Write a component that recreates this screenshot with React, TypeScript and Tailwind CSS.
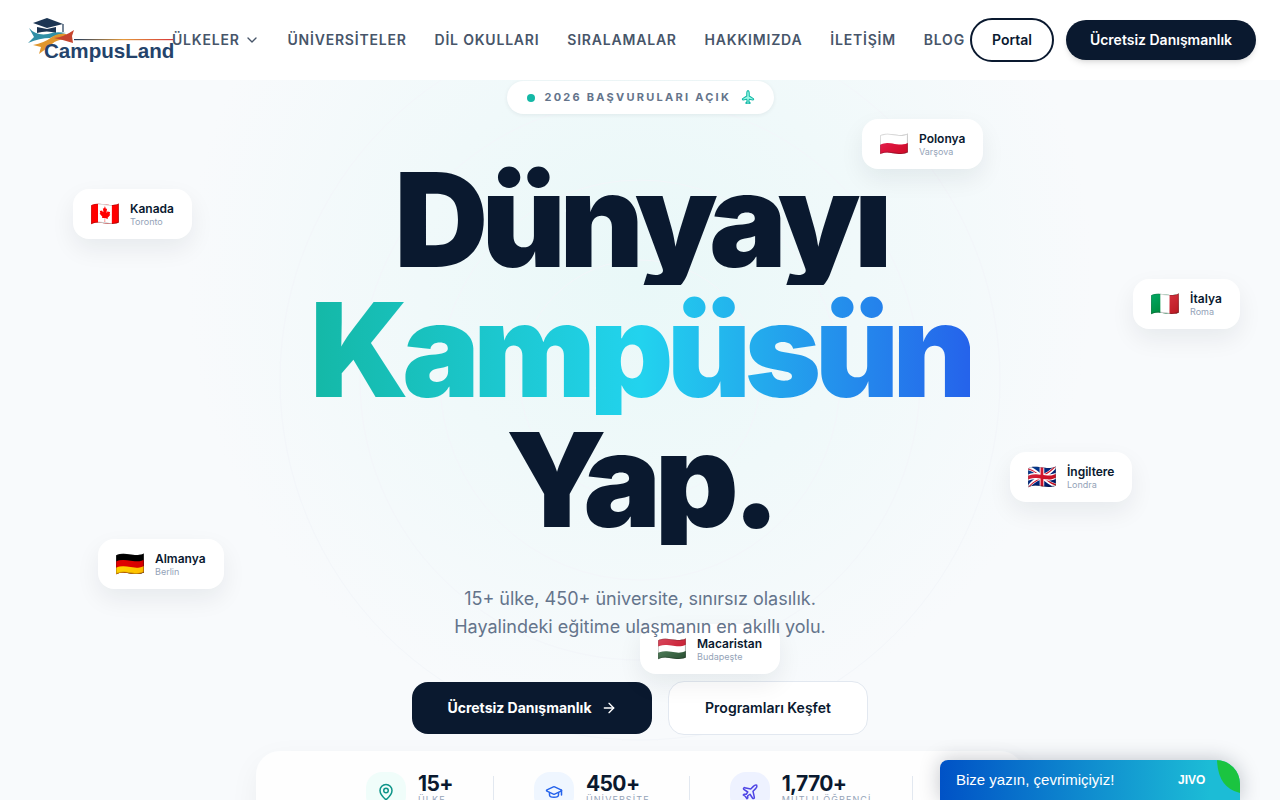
import React from "react";
import { ChevronDown, ArrowRight, MapPin, GraduationCap, Plane } from "lucide-react";

const NAV = ["ÜNİVERSİTELER", "DİL OKULLARI", "SIRALAMALAR", "HAKKIMIZDA", "İLETİŞİM", "BLOG"];

function Logo() {
  return (
    <div className="relative w-[148px] h-[48px] shrink-0 ml-[26px]">
      <svg className="absolute left-0 top-0" width="148" height="48" viewBox="0 0 148 48">
        <defs>
          <linearGradient id="ln" x1="0" x2="1" y1="0" y2="0">
            <stop offset="0" stopColor="#1e3a5f" />
            <stop offset="0.5" stopColor="#e39a3b" />
            <stop offset="1" stopColor="#d8383a" />
          </linearGradient>
        </defs>
        <path d="M7 7 L21 2 L37 8 L21 12 Z" fill="#1c3553" />
        <path d="M11 11 L21 13 L30 11 L30 17 Q21 14 11 17 Z" fill="#1c3553" />
        <path d="M37 8 V16" stroke="#1c3553" strokeWidth="1.2" />
        <path d="M3 12 Q10 20 22 18 Q30 15 40 17 Q30 19 24 22 Q14 22 2 27 L8 21 Z" fill="#2f8fa6" />
        <path d="M7 29 Q18 27 26 21 Q32 17 40 18 L44 24 Q32 22 26 28 Q20 33 13 38 L15 31 Z" fill="#e0962e" />
        <path d="M28 22 Q38 21 48 14 L46 20 L47 27 Q38 24 28 22 Z" fill="#c6452f" />
        <rect x="48" y="23" width="99" height="1.2" fill="url(#ln)" />
      </svg>
      <span className="absolute left-[18px] top-[22px] text-[20.6px] leading-[26px] font-bold text-[#24436b] font-['Liberation_Sans',sans-serif]">CampusLand</span>
    </div>
  );
}

function Header() {
  return (
    <header className="h-20 bg-white flex items-center pr-6 font-['Inter',sans-serif] shrink-0 relative z-20">
      <Logo />
      <nav className="flex items-center gap-[27.8px] text-sm font-semibold tracking-[0.8px] text-[#475569] -ml-[2px]">
        <span className="flex items-center gap-1">ÜLKELER <ChevronDown size={16} strokeWidth={2} /></span>
        {NAV.map((n) => (
          <span key={n}>{n}</span>
        ))}
      </nav>
      <div className="ml-auto flex items-center gap-3">
        <div className="w-[84px] h-[44px] rounded-full border-2 border-[#0a192f] flex items-center justify-center text-sm font-semibold text-[#0a192f]">Portal</div>
        <div className="w-[190px] h-[40px] rounded-full bg-[#0a192f] flex items-center justify-center text-sm font-semibold text-white shadow-md">Ücretsiz Danışmanlık</div>
      </div>
    </header>
  );
}

function FlagCard({ flag, name, city, className }: { flag: string; name: string; city: string; className: string }) {
  return (
    <div className={`absolute h-[50px] rounded-2xl bg-white shadow-[0_10px_25px_rgba(15,23,42,0.07)] flex items-center gap-[10px] pl-[17px] pr-[18px] font-['Inter',sans-serif] z-10 ${className}`}>
      <span className="text-2xl leading-none">{flag}</span>
      <div className="flex flex-col">
        <span className="text-xs leading-[15px] font-semibold text-[#0a192f]">{name}</span>
        <span className="text-[9px] leading-[11px] text-[#94a3b8]">{city}</span>
      </div>
    </div>
  );
}

function Stat({ icon, num, label, tone }: { icon: React.ReactNode; num: string; label: string; tone: string }) {
  return (
    <div className="flex items-start gap-3">
      <div className={`w-10 h-10 rounded-2xl flex items-center justify-center ${tone}`}>{icon}</div>
      <div className="flex flex-col">
        <span className="text-[21px] leading-[24px] tracking-[-0.6px] font-bold text-[#0a192f]">{num}</span>
        <span className="text-[9px] leading-[12px] -mt-[2px] tracking-[1.1px] text-[#94a3b8]">{label}</span>
      </div>
    </div>
  );
}

export default function App() {
  return (
    <div className="relative h-[800px] w-[1280px] overflow-hidden flex flex-col bg-[#f8fafc]">
      <Header />
      <main className="relative flex-1 flex flex-col items-center font-['Inter',sans-serif] bg-[radial-gradient(circle_at_50%_25%,#e9f8f8_0%,#f0f9fa_25%,#f8fafc_52%)]">
        <svg className="absolute left-0 top-0 pointer-events-none" width="1280" height="720" viewBox="0 0 1280 720" fill="none" stroke="#f3f6fa" strokeWidth="1">
          <circle cx="640" cy="300" r="120" />
          <circle cx="640" cy="300" r="200" />
          <circle cx="640" cy="300" r="280" />
          <circle cx="640" cy="300" r="360" />
        </svg>

        <div className="relative mt-[1px] h-[33px] w-[267px] rounded-full bg-white shadow-[0_1px_4px_rgba(15,23,42,0.07)] flex items-center px-[20px] gap-[10px]">
          <span className="w-2 h-2 rounded-full bg-[#14b8a6] shrink-0" />
          <span className="text-[11px] font-bold tracking-[2.25px] text-[#64748b] whitespace-nowrap">2026 BAŞVURULARI AÇIK</span>
          <Plane size={14} className="text-[#14b8a6] fill-[#99f6e4] -rotate-45 shrink-0" strokeWidth={1.8} />
        </div>

        <h1 className="relative mt-[41px] w-full text-center text-[130px] leading-[130px] font-black tracking-[-6.5px] text-[#0a192f]">
          <span className="block h-[130px] overflow-hidden">Dünyayı</span>
          <span className="block h-[130px] overflow-hidden bg-[linear-gradient(90deg,#14b8a6,#22d3ee_50%,#2563eb)] bg-clip-text text-transparent w-[660px] mx-auto">Kampüsün</span>
          <span className="block h-[130px] overflow-hidden">Yap.</span>
        </h1>

        <p className="relative z-20 mt-[40px] text-center text-[18px] leading-[28px] text-[#64748b]">
          15+ ülke, 450+ üniversite, sınırsız olasılık.
          <br />
          Hayalindeki eğitime ulaşmanın en akıllı yolu.
        </p>

        <div className="relative mt-[41px] flex gap-4">
          <div className="w-[240px] h-[52px] rounded-2xl bg-[#0a192f] text-white text-sm font-bold flex items-center justify-center gap-[9px]">
            Ücretsiz Danışmanlık <ArrowRight size={16} />
          </div>
          <div className="w-[200px] h-[54px] -mt-px rounded-2xl bg-white border border-[#e2e8f0] text-[#0a192f] text-sm font-semibold flex items-center justify-center">
            Programları Keşfet
          </div>
        </div>

        <div className="relative mt-[16px] w-[768px] h-[120px] shrink-0 rounded-3xl bg-white/80 shadow-[0_10px_30px_rgba(15,23,42,0.05)] flex pt-[21px] pl-[110px]">
          <Stat tone="bg-[#f0fdfa]" icon={<MapPin size={18} className="text-[#0d9488]" />} num="15+" label="ÜLKE" />
          <div className="w-px h-16 bg-[#e2e8f0] mt-[4px] ml-[40px] mr-[40px]" />
          <Stat tone="bg-[#eff6ff]" icon={<GraduationCap size={18} className="text-[#2563eb]" />} num="450+" label="ÜNİVERSİTE" />
          <div className="w-px h-16 bg-[#e2e8f0] mt-[4px] ml-[39px] mr-[40px]" />
          <Stat tone="bg-[#eef2ff]" icon={<Plane size={18} className="text-[#4f46e5]" />} num="1,770+" label="MUTLU ÖĞRENCİ" />
          <div className="w-px h-16 bg-[#e2e8f0] mt-[4px] ml-[41px]" />
        </div>

        <FlagCard flag="🇨🇦" name="Kanada" city="Toronto" className="left-[73px] top-[109px]" />
        <FlagCard flag="🇵🇱" name="Polonya" city="Varşova" className="left-[862px] top-[39px]" />
        <FlagCard flag="🇮🇹" name="İtalya" city="Roma" className="left-[1133px] top-[199px]" />
        <FlagCard flag="🇬🇧" name="İngiltere" city="Londra" className="left-[1010px] top-[372px]" />
        <FlagCard flag="🇩🇪" name="Almanya" city="Berlin" className="left-[98px] top-[459px]" />
        <FlagCard flag="🇭🇺" name="Macaristan" city="Budapeşte" className="left-[640px] top-[544px]" />
      </main>

      <div className="absolute left-[940px] top-[760px] w-[300px] h-[40px] z-30 rounded-tl-lg rounded-tr-3xl overflow-hidden bg-[linear-gradient(90deg,#0052c6,#1cbcd6_90%)] shadow-[0_0_20px_rgba(15,23,42,0.25)] flex items-center pl-4 font-['Liberation_Sans',sans-serif] text-white text-[15px]">
        <span>Bize yazın, çevrimiçiyiz!</span>
        <span className="absolute left-[238px] top-[13px] text-[12px] leading-[15px] font-bold">JIVO</span>
        <svg className="absolute right-0 top-0" width="24" height="34" viewBox="0 0 24 34"><path d="M1 0 H24 V33 Q2 28 1 0 Z" fill="#1bc440" /></svg>
      </div>
    </div>
  );
}
